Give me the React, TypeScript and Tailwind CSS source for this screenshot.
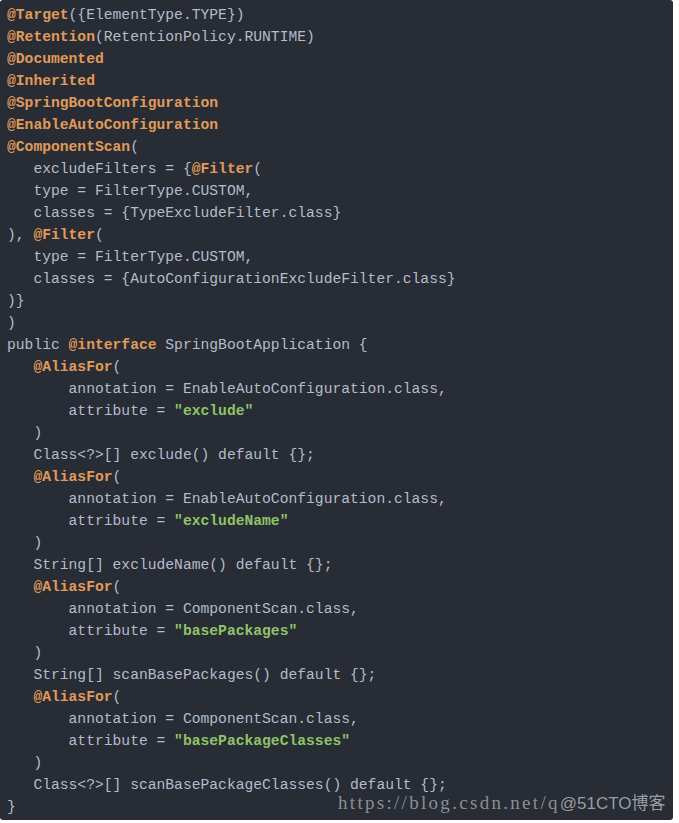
import React from 'react';

type Tok = [string, 'p' | 'a' | 's'];

const A = (t: string): Tok => [t, 'a'];
const P = (t: string): Tok => [t, 'p'];
const S = (t: string): Tok => [t, 's'];

const lines: Tok[][] = [
  [A('@Target'), P('({ElementType.TYPE})')],
  [A('@Retention'), P('(RetentionPolicy.RUNTIME)')],
  [A('@Documented')],
  [A('@Inherited')],
  [A('@SpringBootConfiguration')],
  [A('@EnableAutoConfiguration')],
  [A('@ComponentScan'), P('(')],
  [P('   excludeFilters = {'), A('@Filter'), P('(')],
  [P('   type = FilterType.CUSTOM,')],
  [P('   classes = {TypeExcludeFilter.class}')],
  [P('), '), A('@Filter'), P('(')],
  [P('   type = FilterType.CUSTOM,')],
  [P('   classes = {AutoConfigurationExcludeFilter.class}')],
  [P(')}')],
  [P(')')],
  [P('public '), A('@interface'), P(' SpringBootApplication {')],
  [P('   '), A('@AliasFor'), P('(')],
  [P('       annotation = EnableAutoConfiguration.class,')],
  [P('       attribute = '), S('"exclude"')],
  [P('   )')],
  [P('   Class<?>[] exclude() default {};')],
  [P('   '), A('@AliasFor'), P('(')],
  [P('       annotation = EnableAutoConfiguration.class,')],
  [P('       attribute = '), S('"excludeName"')],
  [P('   )')],
  [P('   String[] excludeName() default {};')],
  [P('   '), A('@AliasFor'), P('(')],
  [P('       annotation = ComponentScan.class,')],
  [P('       attribute = '), S('"basePackages"')],
  [P('   )')],
  [P('   String[] scanBasePackages() default {};')],
  [P('   '), A('@AliasFor'), P('(')],
  [P('       annotation = ComponentScan.class,')],
  [P('       attribute = '), S('"basePackageClasses"')],
  [P('   )')],
  [P('   Class<?>[] scanBasePackageClasses() default {};')],
  [P('}')],
];

const cls = {
  p: 'text-[#b3bccb]',
  a: 'text-[#e09b5a] font-bold',
  s: 'text-[#8fc46a] font-bold',
};

export default function App() {
  return (
    <div className="min-h-screen bg-white">
      <div className="relative w-[673px] h-[820px] rounded-[3px] bg-[#282c34] pt-[4px] pl-[7px] overflow-hidden">
        <pre className="font-['Liberation_Mono',monospace] text-[14.67px] leading-[22px] m-0">
          {lines.map((line, i) => (
            <div key={i} className="whitespace-pre">
              {line.map(([t, k], j) => (
                <span key={j} className={cls[k]}>
                  {t}
                </span>
              ))}
            </div>
          ))}
        </pre>
        {/* watermark */}
        <div className="absolute left-[338px] top-[790px] flex items-baseline whitespace-nowrap leading-[26px]">
          <span className="font-['Liberation_Serif',serif] text-[19px] tracking-[2.3px] text-[#8c8f94]">
            https://blog.csdn.net/q
          </span>
          <span className="font-['Liberation_Sans','Noto_Sans_CJK_SC',sans-serif] text-[17px] text-[#9a9da2]">
            @51CTO博客
          </span>
        </div>
      </div>
    </div>
  );
}
